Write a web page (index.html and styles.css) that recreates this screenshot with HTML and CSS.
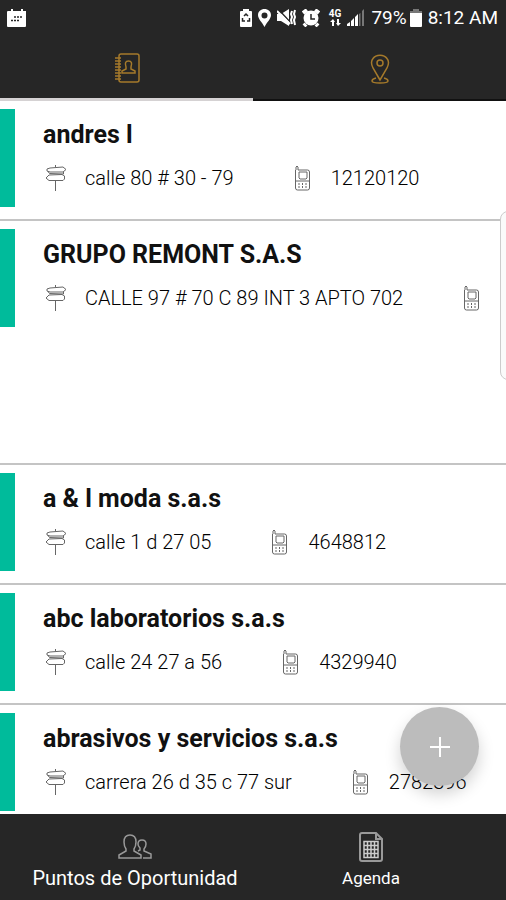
FILE: index.html
```html
<!DOCTYPE html>
<html lang="es">
<head>
<meta charset="utf-8">
<meta name="viewport" content="width=device-width, initial-scale=1">
<title>Agenda</title>
<link rel="stylesheet" href="styles.css">
</head>
<body>
<svg class="defs" aria-hidden="true">
  <symbol id="sign" viewBox="0 0 22 28">
    <path d="M10.500 1v2M5 4l13-1 3 2.500L18 8H5L2 7V5zM17 10.500l-13 .5-3 3 3 2.500h14l1.500-1.500v-3zM3 7.500l1.500 2 14 .5V8M10.500 17v10"/>
  </symbol>
  <symbol id="phone" viewBox="0 0 17 26">
    <path d="M2 5V2q1-2 2 0v3h9.500q2 0 2 2v16q0 2-2 2h-10q-2 0-2-2V5M5 7h8v6l-1 1H6l-1-1zM2 16h13M5 18v2M8.500 18v2M12 18v2M5 21v2M8.500 21v2M12 21v2"/>
  </symbol>
</svg>
<div class="app">
  <header class="top">
    <div class="status">
      <svg class="calendar" width="20" height="18" viewBox="0 0 20 18"><path fill="#fff" d="M1 2h3V0h2v2h8V0h2v2h3v15q0 1-1 1H1q-1 0-1-1V3q0-1 1-1z"/><path stroke="#262626" stroke-width="1.500" stroke-dasharray="2 1" d="M7 8h9M4 11.500h9"/></svg>
      <div class="indicators">
        <svg width="12" height="18" viewBox="0 0 12 18"><path fill="#fff" d="M3 0h6v2h2q1 0 1 1v14q0 1-1 1H1q-1 0-1-1V3q0-1 1-1h2z"/><path fill="none" stroke="#262626" stroke-width="1.500" d="M4 7l2-2 2 2M2.500 9v3h2.500M7 12h2.500V9"/></svg>
        <svg width="13" height="18" viewBox="0 0 13 18"><path fill="#fff" fill-rule="evenodd" d="M6.500 0C10 0 13 2.500 13 6c0 4-4 7-6.500 12C4 13 0 10 0 6c0-3.500 3-6 6.500-6zm0 3.500a3 3 0 100 6 3 3 0 000-6z"/></svg>
        <svg width="19" height="18" viewBox="0 0 19 18"><path fill="#fff" d="M0 5h4l8-5v17l-8-5H0z"/><path stroke="#262626" stroke-width="1.500" d="M2 1l12 13"/><path fill="none" stroke="#fff" stroke-width="2" d="M0 2l13 13M15 2l-1 3 1 3-1 3 1 4M18 1l-1 4 1 3-1 3 1 5"/></svg>
        <svg width="18" height="18" viewBox="0 0 18 18"><path stroke="#fff" stroke-width="4" d="M1 4l4-3M17 4l-4-3M4 15l-2 2M14 15l2 2"/><circle cx="9" cy="9" r="7.500" fill="#fff"/><path fill="none" stroke="#262626" stroke-width="1.500" d="M9 5v5h4"/></svg>
        <span class="network"><span>4G</span><svg width="11" height="7" viewBox="0 0 11 7"><path fill="#fff" d="M2 7V3H0l3-3 2 3H4v4zM7 0h2v4h2L8 7 6 4h1z"/></svg></span>
        <svg width="18" height="17" viewBox="0 0 18 17"><path fill="#fff" d="M0 17v-2l3-2v4zM4 17v-5l3-3v8zM8 17V8l3-3v12z"/><path fill="#777" d="M12 17V5l1.500-1v13zM15 17V2l2-2v17z"/></svg>
        <span class="percent">79%</span>
        <svg width="12" height="18" viewBox="0 0 12 18"><path fill="#777" d="M3 0h6v2h3v3H0V2h3z"/><path fill="#fff" d="M0 4h12v13q0 1-1 1H1q-1 0-1-1z"/></svg>
        <time>8:12 AM</time>
      </div>
    </div>
    <nav class="tabs" aria-label="Vistas">
      <button class="tab active" aria-label="Contactos"><svg width="26" height="31" viewBox="0 0 26 31"><rect x="5" y="1" width="20" height="28" rx="2"/><path d="M1 5h6M1 8h6M1 11h6M1 14h6M1 17h6M1 20h6M1 23h6M1 26h6M8 20h13v-2l-4-2v-2q2-6-2.500-6T12 14v2l-4 2z"/></svg></button>
      <button class="tab" aria-label="Mapa"><svg width="20" height="31" viewBox="0 0 20 31"><path d="M10 26L3 14Q0 8 3 4.500C6 0 14 0 17 4.500Q20 8 17 14zM6 24q-4 1-4 3 0 2 8 2t8-2q0-2-4-3"/><circle cx="10" cy="9" r="3"/></svg></button>
    </nav>
  </header>
  <main class="list">
    <article class="item"><div class="content"><h2>andres l</h2><p><svg class="sign"><use href="#sign"/></svg><span class="address">calle 80 # 30 - 79</span><svg class="phone"><use href="#phone"/></svg><span>12120120</span></p></div></article>
    <article class="item tall"><div class="content"><h2>GRUPO REMONT S.A.S</h2><p><svg class="sign"><use href="#sign"/></svg><span class="address">CALLE 97 # 70 C 89 INT 3 APTO 702</span><svg class="phone"><use href="#phone"/></svg></p></div></article>
    <article class="item"><div class="content"><h2>a &amp; l moda s.a.s</h2><p><svg class="sign"><use href="#sign"/></svg><span class="address">calle 1 d 27 05</span><svg class="phone"><use href="#phone"/></svg><span>4648812</span></p></div></article>
    <article class="item"><div class="content"><h2>abc laboratorios s.a.s</h2><p><svg class="sign"><use href="#sign"/></svg><span class="address">calle 24 27 a 56</span><svg class="phone"><use href="#phone"/></svg><span>4329940</span></p></div></article>
    <article class="item"><div class="content"><h2>abrasivos y servicios s.a.s</h2><p><svg class="sign"><use href="#sign"/></svg><span class="address">carrera 26 d 35 c 77 sur</span><svg class="phone"><use href="#phone"/></svg><span>2782396</span></p></div></article>
  </main>
  <nav class="bottom" aria-label="Principal">
    <button class="large"><svg width="34" height="28" viewBox="0 0 34 28"><path d="M1 25v-3l7-4v-2q-2-3-2-7 0-7 6-7t6 7q0 4-2 7v2l7 4v3zM20 18l2-1v-2q-2-2-2-4 0-4 4-4t4 4q0 3-2 5v2l7 3v4h-8"/></svg><span>Puntos de Oportunidad</span></button>
    <button><svg width="24" height="30" viewBox="0 0 24 30"><path stroke-width="2" d="M3 1h14l6 6v20q0 2-2 2H3q-2 0-2-2V3q0-2 2-2zM17 1v6h6"/><path stroke="#ccc" d="M5 9.500h14v16H5zM5 13.500h14M5 17.500h14M5 21.500h14M8.500 9v17M12 9v17M15.500 9v17"/></svg><span>Agenda</span></button>
  </nav>
  <div class="edge-handle"></div>
  <button class="fab" aria-label="Agregar"><svg width="20" height="20" viewBox="0 0 20 20"><path d="M10 0v20M0 10h20"/></svg></button>
</div>
</body>
</html>
```
FILE: styles.css
```css
* { box-sizing: border-box; }
body { margin: 0; font-family: Roboto, "Liberation Sans", sans-serif; color: #111; background: #fff; }
button { padding: 0; border: 0; background: none; color: inherit; font: inherit; }
svg { display: block; flex: none; }
h2, p { margin: 0; }
.defs { position: absolute; width: 0; height: 0; }
.app { position: relative; display: flex; flex-direction: column; height: 100vh; overflow: hidden; }

.top { flex: none; background: #262626; color: #fff; }
.status { display: flex; justify-content: space-between; align-items: center; height: 35px; padding: 0 8px 0 7px; }
.indicators { display: flex; align-items: center; gap: 6px; font-size: 19px; line-height: 24px; }
.percent { margin-right: -3px; }
.network { display: flex; flex-direction: column; align-items: center; margin: 0 0 0 3px; font-size: 10px; font-weight: 700; line-height: 10px; }
.tabs { display: grid; grid-template-columns: 1fr 1fr; }
.tab { display: flex; justify-content: center; align-items: center; height: 66px; padding-top: 4px; border-bottom: 2px solid #111; }
.tab.active { border-bottom: 3px solid #d5d2d3; }
.tab svg { fill: none; stroke: #a57a2b; stroke-width: 1.5; }

.list { flex: 1; min-height: 0; overflow: hidden; }
.item { min-height: 120px; padding: 8px 0; border-bottom: 2px solid #c4c4c4; }
.item.tall { min-height: 244px; }
.content { height: 98px; padding: 10px 0 0 28px; border-left: 15px solid #00bb9b; }
h2 { font-size: 25px; font-weight: 700; line-height: 32px; white-space: nowrap; }
.content p { display: flex; align-items: center; margin-top: 11px; padding-left: 2px; font-size: 20px; font-weight: 300; line-height: 32px; color: #000; white-space: nowrap; }
.sign { width: 22px; height: 28px; }
.phone { width: 17px; height: 26px; margin-right: 20px; }
.sign, .phone { fill: none; stroke: #666; stroke-width: 1; }
.address { margin: 0 60px 0 18px; }

.bottom { flex: none; display: grid; grid-template-columns: 1fr 1fr; height: 86px; padding: 0 17px; background: #262626; color: #fff; }
.bottom button { display: flex; flex-direction: column; align-items: center; padding-top: 18px; gap: 3px; font-size: 17px; line-height: 26px; }
.bottom .large { font-size: 20px; }
.bottom svg { height: 30px; fill: none; stroke: #999; stroke-width: 1.5; }

.fab { position: absolute; right: 27px; bottom: 114px; display: grid; place-items: center; width: 79px; height: 79px; border-radius: 50%; background: #bcbcbc; box-shadow: 0 8px 16px rgba(0, 0, 0, .18); }
.fab svg { stroke: #fff; stroke-width: 2; }
.edge-handle { position: absolute; top: 211px; right: -10px; width: 16px; height: 169px; border: 1px solid #ccc; border-radius: 8px; background: #fafafa; }
```
